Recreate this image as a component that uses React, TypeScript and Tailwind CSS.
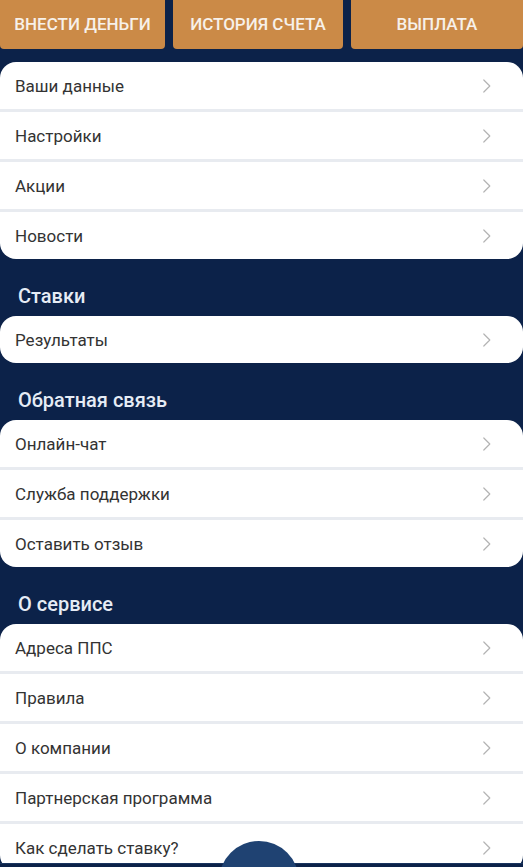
import React from "react";

const Chevron = () => (
  <svg width="10" height="16" viewBox="0 0 10 16" fill="none">
    <path d="M1.8 2 L7.8 8 L1.8 14" stroke="#b5b5b5" strokeWidth="1.2" strokeLinecap="round" strokeLinejoin="round" />
  </svg>
);

function Card({ items }: { items: string[] }) {
  return (
    <div className="bg-white rounded-[16px] overflow-hidden">
      {items.map((t, i) => (
        <div key={t}>
          {i > 0 && <div className="h-[3px] bg-[#e8ebf0]" />}
          <div className="h-[47px] flex items-center justify-between pl-[15px] pr-[31px]">
            <span className="text-[17px] text-[#333333] leading-none pt-[1px]">{t}</span>
            <Chevron />
          </div>
        </div>
      ))}
    </div>
  );
}

function Heading({ children }: { children: React.ReactNode }) {
  return (
    <div className="h-[57px] flex items-end pb-[8px] pl-[18px]">
      <span className="text-[20px] leading-[24px] font-medium text-[#e6ecf5]">{children}</span>
    </div>
  );
}

export default function App() {
  return (
    <div
      className="relative w-[523px] h-[867px] overflow-hidden bg-[#0c2249]"
      style={{ fontFamily: "Roboto, 'Noto Sans', sans-serif" }}
    >
      <div className="flex gap-[8px] h-[49px]">
        {[
          ["ВНЕСТИ ДЕНЬГИ", "w-[165px]"],
          ["ИСТОРИЯ СЧЕТА", "w-[170px]"],
          ["ВЫПЛАТА", "flex-1"],
        ].map(([t, w]) => (
          <div
            key={t}
            className={`${w} bg-[#cb8a47] rounded-b-[4px] flex items-center justify-center text-[17px] font-medium text-[#f7f1ea]`}
          >
            {t}
          </div>
        ))}
      </div>
      <div className="mt-[13px]">
        <Card items={["Ваши данные", "Настройки", "Акции", "Новости"]} />
        <Heading>Ставки</Heading>
        <Card items={["Результаты"]} />
        <Heading>Обратная связь</Heading>
        <Card items={["Онлайн-чат", "Служба поддержки", "Оставить отзыв"]} />
        <Heading>О сервисе</Heading>
        <Card items={["Адреса ППС", "Правила", "О компании", "Партнерская программа", "Как сделать ставку?"]} />
      </div>
      <div className="absolute left-0 right-0 top-[863px] h-[10px] bg-[#0c2249] border-t border-[#1a355f]" />
      <div className="absolute left-[219px] top-[841px] w-[80px] h-[80px] rounded-full bg-[#1f4272]" />
    </div>
  );
}
